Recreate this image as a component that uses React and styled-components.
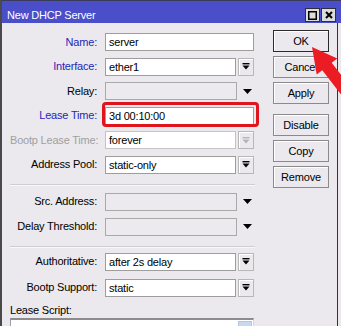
import React from "react";
import styled, { createGlobalStyle } from "styled-components";

const GlobalStyle = createGlobalStyle`
  html, body { margin: 0; padding: 0; background: #ebe9ed; }
  body {
    font-family: "Liberation Sans", Arial, sans-serif;
    font-size: 11px;
    letter-spacing: -0.2px;
    color: #000;
  }
  * { box-sizing: border-box; }
`;

const Window = styled.div`
  position: relative;
  width: 341px;
  height: 326px;
  overflow: hidden;
  border-left: 2px solid #4a4a4a;
  background: #ebe9ed;
  display: flex;
  flex-direction: column;
`;

const TitleBar = styled.div`
  height: 23px;
  flex: 0 0 23px;
  background: #4a4ec9;
  border-top: 1px solid #3a3a5a;
  display: flex;
  align-items: flex-start;
  padding: 7px 5px 0 5px;
  color: #fff;
`;

const TitleText = styled.div`
  line-height: 13px;
  margin-top: 1px;
  white-space: nowrap;
`;

const TitleButtons = styled.div`
  margin-left: auto;
  display: flex;
  gap: 1px;
`;

const TitleButton = styled.div`
  width: 15px;
  height: 14px;
  background: #dcdcdc;
  border: 1px solid #303030;
  display: flex;
  align-items: center;
  justify-content: center;
`;

const Body = styled.div`
  flex: 1;
  display: flex;
  border-right: 1px solid #333;
  margin-right: 3px;
  min-height: 0;
`;

const Form = styled.div`
  flex: 0 0 260px;
  display: flex;
  flex-direction: column;
  padding: 10px 0 0 8px;
  min-height: 0;
`;

const Section = styled.div`
  display: flex;
  flex-direction: column;
  gap: ${(p) => p.$gap}px;
`;

const Row = styled.div`
  display: grid;
  grid-template-columns: 87px 149px;
  column-gap: 8px;
  align-items: center;
  height: 18px;
`;

const toneColor = { blue: "#2626b8", muted: "#a0a0a0", normal: "#000" };

const Label = styled.div`
  text-align: right;
  white-space: nowrap;
  color: ${(p) => toneColor[p.$tone || "normal"]};
  line-height: 13px;
`;

const Field = styled.div`
  position: relative;
  display: flex;
  gap: 2px;
  height: 18px;
  ${(p) =>
    p.$highlight &&
    `
    &::after {
      content: "";
      position: absolute;
      left: -3px;
      right: -5px;
      top: -5px;
      bottom: -2px;
      border: 3px solid #e0141c;
      border-radius: 4px;
      pointer-events: none;
    }
  `}
`;

const inputLook = {
  normal: "background:#fff; border-color:#9d9d9d;",
  muted: "background:#fff; border-color:#c4c4c4;",
  empty: "background:#eceaee; border-color:#a9a9a9;",
};

const Input = styled.div`
  flex: 1;
  height: 18px;
  border: 1px solid;
  ${(p) => inputLook[p.$look || "normal"]}
  padding: 0 3px;
  line-height: 16px;
  white-space: nowrap;
  overflow: hidden;
`;

const DropButton = styled.div`
  flex: 0 0 16px;
  height: 18px;
  border: 1px solid #b7b7b7;
  background: #ebe9ed;
  box-shadow: inset 1px 1px 0 #fff;
  display: flex;
  align-items: center;
  justify-content: center;
`;

const TriangleSlot = styled.div`
  flex: 0 0 15px;
  display: flex;
  align-items: center;
  justify-content: flex-end;
  padding-right: 2px;
`;

const Separator = styled.div`
  width: 245px;
  height: 2px;
  border-top: 1px solid #cfcdd2;
  border-bottom: 1px solid #f8f8f9;
  margin: ${(p) => p.$top}px 0 ${(p) => p.$bottom}px 0;
`;

const ScriptLabel = styled.div`
  margin-top: 7px;
  line-height: 13px;
`;

const ScriptBox = styled.div`
  margin-top: 1px;
  width: 244px;
  flex: 1;
  background: #fff;
  border-top: 2px solid #8c8c8c;
  border-left: 1px solid #a0a0a0;
  border-right: 1px solid #d8d8d8;
  display: flex;
  justify-content: flex-end;
`;

const ScrollUp = styled.div`
  width: 14px;
  height: 14px;
  margin: 1px 1px 0 0;
  background: #c9d8ef;
  border: 1px solid #b4c6e4;
`;

const ButtonColumn = styled.div`
  margin-left: 11px;
  width: 56px;
  padding-top: 7px;
  display: flex;
  flex-direction: column;
  gap: 4px;
`;

const Button = styled.div`
  height: 22px;
  border: 1px solid ${(p) => (p.$default ? "#2a2a2a" : "#8a8a8a")};
  background: #ebe9ed;
  box-shadow: inset 1px 1px 0 #fff;
  display: flex;
  align-items: center;
  justify-content: center;
  margin-top: ${(p) => (p.$spaced ? 6 : 0)}px;
  line-height: 13px;
`;

const ArrowLayer = styled.svg`
  position: absolute;
  left: -2px;
  top: 0;
  width: 341px;
  height: 326px;
  pointer-events: none;
`;

const DropIcon = ({ muted }) => (
  <svg width="8" height="7" viewBox="0 0 8 7">
    <rect x="0.5" y="0" width="7" height="1.4" fill={muted ? "#b5b5b5" : "#000"} />
    <path d="M0.5 2.5 L7.5 2.5 L4 6.5 Z" fill={muted ? "#b5b5b5" : "#000"} />
  </svg>
);

const Triangle = () => (
  <svg width="9" height="5" viewBox="0 0 9 5">
    <path d="M0 0 L9 0 L4.5 5 Z" fill="#000" />
  </svg>
);

const sectionA = [
  { label: "Name:", tone: "blue", value: "server", kind: "plain" },
  { label: "Interface:", tone: "blue", value: "ether1", kind: "select" },
  { label: "Relay:", value: "", kind: "triangle", look: "empty" },
  { label: "Lease Time:", tone: "blue", value: "3d 00:10:00", kind: "plain", highlight: true },
  { label: "Bootp Lease Time:", tone: "muted", value: "forever", kind: "select", look: "muted", mutedIcon: true },
  { label: "Address Pool:", value: "static-only", kind: "select" },
];

const sectionB = [
  { label: "Src. Address:", value: "", kind: "triangle", look: "empty" },
  { label: "Delay Threshold:", value: "", kind: "triangle", look: "empty" },
];

const sectionC = [
  { label: "Authoritative:", value: "after 2s delay", kind: "select" },
  { label: "Bootp Support:", value: "static", kind: "select" },
];

const FormRow = ({ row }) => (
  <Row>
    <Label $tone={row.tone}>{row.label}</Label>
    <Field $highlight={row.highlight}>
      <Input $look={row.look}>{row.value}</Input>
      {row.kind === "select" && (
        <DropButton>
          <DropIcon muted={row.mutedIcon} />
        </DropButton>
      )}
      {row.kind === "triangle" && (
        <TriangleSlot>
          <Triangle />
        </TriangleSlot>
      )}
    </Field>
  </Row>
);

export default function App() {
  return (
    <>
      <GlobalStyle />
      <Window>
        <TitleBar>
          <TitleText>New DHCP Server</TitleText>
          <TitleButtons>
            <TitleButton>
              <svg width="9" height="9" viewBox="0 0 9 9">
                <rect x="0.75" y="0.75" width="7.5" height="7.5" fill="none" stroke="#000" strokeWidth="1.5" />
              </svg>
            </TitleButton>
            <TitleButton>
              <svg width="8" height="8" viewBox="0 0 8 8">
                <path d="M1 1 L7 7 M7 1 L1 7" stroke="#000" strokeWidth="2" />
              </svg>
            </TitleButton>
          </TitleButtons>
        </TitleBar>
        <Body>
          <Form>
            <Section $gap={6.6}>
              {sectionA.map((r) => (
                <FormRow key={r.label} row={r} />
              ))}
            </Section>
            <Separator $top={10} $bottom={7} />
            <Section $gap={7}>
              {sectionB.map((r) => (
                <FormRow key={r.label} row={r} />
              ))}
            </Section>
            <Separator $top={10} $bottom={5} />
            <Section $gap={8}>
              {sectionC.map((r) => (
                <FormRow key={r.label} row={r} />
              ))}
            </Section>
            <ScriptLabel>Lease Script:</ScriptLabel>
            <ScriptBox>
              <ScrollUp />
            </ScriptBox>
          </Form>
          <ButtonColumn>
            <Button $default>OK</Button>
            <Button>Cancel</Button>
            <Button>Apply</Button>
            <Button $spaced>Disable</Button>
            <Button>Copy</Button>
            <Button>Remove</Button>
          </ButtonColumn>
        </Body>
        <ArrowLayer viewBox="0 0 341 326">
          <polygon
            points="312,47 337.3,58.6 331.7,62.8 362,102 353,110 322.3,70.2 316.7,74.4"
            fill="#ec1c24"
          />
        </ArrowLayer>
      </Window>
    </>
  );
}
